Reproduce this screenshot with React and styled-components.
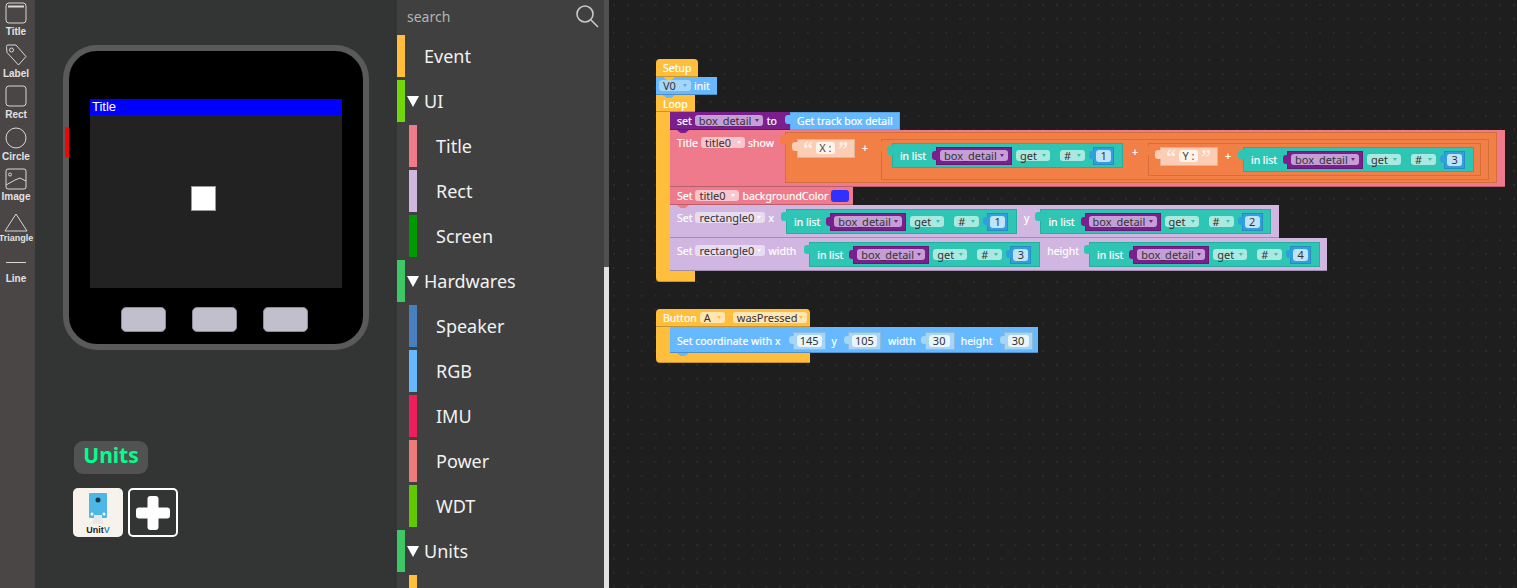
import React from 'react';
import styled, { createGlobalStyle } from 'styled-components';

const YELLOW = '#ffbf3c';
const SKY = '#66b8ff';
const PINK = '#ee7a8b';
const LILAC = '#d0b6e0';
const ORANGE = '#f27f45';
const TEAL = '#2fc5b4';
const PURPLE = '#7b1e8e';

const GlobalStyle = createGlobalStyle`
  html, body {
    margin: 0;
    height: 100%;
    overflow: hidden;
    background: #1e1e1e;
  }
`;

const Page = styled.div`
  display: flex;
  width: 1517px;
  height: 588px;
  overflow: hidden;
`;

/* left tool rail */
const Rail = styled.div`
  width: 35px;
  flex: none;
  padding: 2px 3px 0 0;
  box-sizing: border-box;
  background: #4a4645;
  display: flex;
  flex-direction: column;
`;

const Tool = styled.div`
  height: ${props => props.$h || 41.5}px;
  padding-top: ${props => props.$pt || 0}px;
  box-sizing: border-box;
  display: flex;
  flex-direction: column;
  align-items: center;
  svg { display: block; flex: none; }
`;

const ToolName = styled.span`
  font: bold ${props => props.$small ? 9 : 10}px/12px "Liberation Sans", sans-serif;
  color: #e2e2e2;
  margin-top: ${props => props.$top ?? 2}px;
`;

/* device preview panel */
const Stage = styled.div`
  width: 362px;
  flex: none;
  box-sizing: border-box;
  background: #333534;
  padding: 45px 0 0 28px;
`;

const Device = styled.div`
  position: relative;
  width: 306px;
  height: 305px;
  box-sizing: border-box;
  border: 6px solid #5a5a5a;
  border-radius: 34px;
  background: #000;
  padding: 48px 0 0 21px;
`;

const SideLed = styled.div`
  position: absolute;
  left: -4px;
  top: 76px;
  width: 4px;
  height: 31px;
  border-radius: 2px;
  background: #ff0000;
`;

const Screen = styled.div`
  position: relative;
  width: 252px;
  height: 189px;
  background: #222;
`;

const TitleBar = styled.div`
  height: 16px;
  background: #0000ff;
  color: #fff;
  font: 13px/16px "Liberation Sans", sans-serif;
  padding-left: 2px;
`;

const Square = styled.div`
  position: absolute;
  left: 101px;
  top: 87px;
  width: 25px;
  height: 25px;
  box-sizing: border-box;
  background: #fff;
  border: 1px solid #999;
`;

const Keys = styled.div`
  display: flex;
  gap: 26px;
  margin: 19px 0 0 31px;
`;

const Key = styled.div`
  width: 45px;
  height: 25px;
  box-sizing: border-box;
  border-radius: 5px;
  background: #c1bfcb;
  border: 1px solid #8d8b98;
`;

const UnitsBadge = styled.div`
  width: 74px;
  height: 33px;
  margin: 91px 0 0 11px;
  border-radius: 9px;
  background: #525252;
  color: #00ff8c;
  font: bold 21px/28px "Noto Sans", sans-serif;
  text-align: center;
`;

const Thumbs = styled.div`
  display: flex;
  gap: 5px;
  margin: 14px 0 0 10px;
`;

const UnitCard = styled.div`
  width: 50px;
  height: 49px;
  border-radius: 5px;
  background: #f7f3ec;
  display: flex;
  flex-direction: column;
  align-items: center;
  padding-top: 5px;
  box-sizing: border-box;
`;

const UnitName = styled.span`
  font: bold 9px/9px "Liberation Sans", sans-serif;
  color: #222;
  margin-top: 1px;
  b { color: #2f8fd0; }
`;

const AddCard = styled.div`
  width: 50px;
  height: 49px;
  box-sizing: border-box;
  border: 2px solid #fff;
  border-radius: 5px;
  display: flex;
  align-items: center;
  justify-content: center;
  svg { filter: blur(0.6px); }
`;

/* block palette */
const Palette = styled.div`
  width: 207px;
  flex: none;
  background: #404040;
  overflow: hidden;
`;

const SearchRow = styled.div`
  height: 35px;
  display: flex;
  align-items: center;
  justify-content: space-between;
  padding: 0 5px 3px 10px;
  box-sizing: border-box;
  color: #b4b4b4;
  font: 14px "Noto Sans", sans-serif;
`;

const Category = styled.div`
  height: 42px;
  margin-bottom: 3px;
  display: flex;
  align-items: center;
  padding-left: ${props => props.$child ? 12 : 0}px;
  color: #f2f2f2;
  font: 18px/42px "Noto Sans", sans-serif;
`;

const Swatch = styled.div`
  width: 8px;
  height: 42px;
  flex: none;
  background: ${props => props.$color};
`;

const Caret = styled.span`
  width: 0;
  height: 0;
  margin: 0 5px 0 2px;
  border-left: 6px solid transparent;
  border-right: 6px solid transparent;
  border-top: 11px solid #fff;
`;

const CategoryName = styled.span`
  margin-left: ${props => props.$gap}px;
`;

const ScrollTrack = styled.div`
  width: 5px;
  flex: none;
  background: #505050;
  padding-top: 267px;
`;

const ScrollThumb = styled.div`
  height: 321px;
  background: #e2e2e2;
`;

/* workspace, stacks sit on a free canvas */
const Workspace = styled.div`
  position: relative;
  flex: 1;
  background-color: #1e1e1e;
  background-image: radial-gradient(circle at 1px 1px, #2b2b2b 1px, transparent 1.4px);
  background-size: 13.85px 13.85px;
  background-position: 4px 4px;
`;

const Stack = styled.div`
  position: absolute;
  left: 47px;
  top: ${props => props.$top}px;
  display: flex;
  flex-direction: column;
  align-items: flex-start;
  font: 11px "Noto Sans", sans-serif;
  color: #fff;
`;

const Block = styled.div`
  position: relative;
  display: flex;
  align-items: flex-start;
  box-sizing: border-box;
  width: ${props => props.$w}px;
  height: ${props => props.$h}px;
  padding: ${props => props.$pad || '0 0 0 7px'};
  background: ${props => props.$bg};
  box-shadow: inset 0 -1px 0 rgba(0, 0, 0, 0.22);
  border-radius: ${props => props.$radius || '0'};
  ${props => props.$notch && `
    &::after {
      content: "";
      position: absolute;
      z-index: 3;
      left: 7px;
      bottom: -3px;
      width: 12px;
      height: 3px;
      background: ${props.$bg};
      clip-path: polygon(0 0, 100% 0, 70% 100%, 30% 100%);
    }
  `}
`;

const Label = styled.span`
  flex: none;
  font-size: 10.5px;
  line-height: 18px;
  white-space: nowrap;
  -webkit-text-stroke: 0.2px #fff;
  margin-left: ${props => props.$ml || 0}px;
  margin-right: ${props => props.$mr || 0}px;
`;

const Pill = styled.span`
  flex: none;
  display: flex;
  align-items: center;
  justify-content: space-between;
  box-sizing: border-box;
  width: ${props => props.$w}px;
  height: 11px;
  margin: ${props => props.$m || '3px 0 0 0'};
  padding: 0 4px;
  border-radius: 3px;
  background: ${props => props.$bg};
  color: ${props => props.$color || '#333'};
  font-size: 11px;
  line-height: 11px;
  &::after {
    content: "";
    flex: none;
    border-left: 2.5px solid transparent;
    border-right: 2.5px solid transparent;
    border-top: 3px solid ${props => props.$arrow || '#fff'};
  }
`;

const ColorChip = styled.span`
  flex: none;
  width: 18px;
  height: 12px;
  margin: 3px 0 0 3px;
  border-radius: 3px;
  background: #3030ff;
`;

const Socket = styled.div`
  position: relative;
  flex: none;
  display: flex;
  align-items: flex-start;
  box-sizing: border-box;
  width: ${props => props.$w}px;
  height: ${props => props.$h}px;
  margin: ${props => props.$m || '0'};
  padding: ${props => props.$pad || '0'};
  background: ${props => props.$bg};
  box-shadow: inset 0 0 0 1px rgba(0, 0, 0, 0.12);
  &::before {
    content: "";
    position: absolute;
    left: -5px;
    top: 3px;
    width: 6px;
    height: 9px;
    border-radius: 3px 0 0 3px;
    background: ${props => props.$bg};
  }
`;

const TextValue = styled.span`
  flex: none;
  width: 19px;
  margin: 3px 0 0 4px;
  height: 12px;
  line-height: 12px;
  text-align: center;
  border-radius: 3px;
  background: #fff3ea;
  color: #444;
  font-size: 11px;
  white-space: nowrap;
`;

const Quote = styled.span`
  flex: none;
  width: 9px;
  margin: 2px 0 0 ${props => props.$ml || 0}px;
  color: #fff;
  opacity: 0.7;
  font: bold 20px/16px "Liberation Serif", serif;
`;

const NumSlot = styled.div`
  position: relative;
  flex: none;
  box-sizing: border-box;
  width: ${props => props.$w}px;
  height: 18px;
  margin: ${props => props.$m || '0'};
  padding: ${props => props.$pad || '3px 3px 0'};
  background: ${props => props.$bg};
  box-shadow: inset 0 0 0 1px rgba(0, 0, 0, 0.12);
  &::before {
    content: "";
    position: absolute;
    left: -4px;
    top: 4px;
    width: 5px;
    height: 8px;
    border-radius: 3px 0 0 3px;
    background: ${props => props.$bg};
  }
`;

const NumValue = styled.div`
  height: 12px;
  border-radius: 3px;
  background: ${props => props.$bg};
  color: #333;
  font-size: 11px;
  line-height: 12px;
  text-align: center;
`;

const VarChip = styled.div`
  position: relative;
  flex: none;
  box-sizing: border-box;
  width: 76px;
  height: 18px;
  margin-left: 10px;
  padding-left: 4px;
  background: ${PURPLE};
  box-shadow: inset 0 0 0 1px rgba(0, 0, 0, 0.15);
  &::before {
    content: "";
    position: absolute;
    left: -4px;
    top: 4px;
    width: 5px;
    height: 9px;
    border-radius: 3px 0 0 3px;
    background: ${PURPLE};
  }
`;

const BlockRow = styled.div`
  position: relative;
  z-index: 2;
  display: flex;
  align-items: flex-start;
`;

const LoopWrap = styled.div`
  display: flex;
  align-items: flex-start;
`;

const Spine = styled.div`
  width: 14px;
  height: ${props => props.$h}px;
  flex: none;
  background: ${YELLOW};
`;

const LoopBody = styled.div`
  display: flex;
  flex-direction: column;
  align-items: flex-start;
`;

function InList({ n, m = '0' }) {
  return (
    <Socket $bg={TEAL} $w={231} $h={25} $m={m} $pad="4px 0 0 8px">
      <Label>in list</Label>
      <VarChip>
        <Pill $w={68} $bg="#c49fd6" $m="3px 0 0 0" $arrow="#7b1e8e">box_detail</Pill>
      </VarChip>
      <Pill $w={34} $bg="#abe8df" $m="3px 0 0 4px" $arrow="#2fc5b4">get</Pill>
      <Pill $w={25} $bg="#abe8df" $m="3px 0 0 10px" $arrow="#2fc5b4">#</Pill>
      <NumSlot $w={21} $bg="#2f9fdd" $m="0 0 0 8px">
        <NumValue $bg="#bfe3f7">{n}</NumValue>
      </NumSlot>
    </Socket>
  );
}

function TextBlock({ value }) {
  return (
    <Socket $bg="#fbcdb4" $w={58} $h={19} $pad="0 0 0 6px">
      <Quote>“</Quote>
      <TextValue>{value}</TextValue>
      <Quote $ml={3}>”</Quote>
    </Socket>
  );
}

function Coord({ w, value, right }) {
  return (
    <NumSlot $w={w} $bg="#a6d6f7" $pad={`3px ${right}px 0 4px`}>
      <NumValue $bg="#e8f5fd">{value}</NumValue>
    </NumSlot>
  );
}

const tools = [
  {
    name: 'Title',
    icon: <><rect x="1" y="1" width="20" height="20" rx="3" /><path d="M3 4.5h16" strokeWidth="2" /></>,
  },
  {
    name: 'Label',
    icon: <><path d="M1.5 2.5Q1.5 1 3 1H11L21 12.5 13.5 21 2 8.5z" /><circle cx="6.5" cy="6" r="2" /></>,
  },
  { name: 'Rect', icon: <rect x="1" y="1" width="20" height="20" rx="3" /> },
  { name: 'Circle', icon: <circle cx="11" cy="11" r="10" /> },
  {
    name: 'Image',
    icon: <><rect x="1" y="1" width="20" height="20" rx="2" /><circle cx="5" cy="6.5" r="1.5" /><path d="M1 17 10 12l5-2 6 3" /></>,
  },
];

const categories = [
  { name: 'Event', color: YELLOW },
  { name: 'UI', color: '#72d70a', open: true },
  { name: 'Title', color: PINK, child: true },
  { name: 'Rect', color: LILAC, child: true },
  { name: 'Screen', color: '#009a00', child: true },
  { name: 'Hardwares', color: '#3cc864', open: true },
  { name: 'Speaker', color: '#4a7fbf', child: true },
  { name: 'RGB', color: SKY, child: true },
  { name: 'IMU', color: '#ee1e5a', child: true },
  { name: 'Power', color: '#ee7a7a', child: true },
  { name: 'WDT', color: '#5fc800', child: true },
  { name: 'Units', color: '#3cc864', open: true },
  { name: '', color: YELLOW, child: true },
];

export default function App() {
  return (
    <Page>
      <GlobalStyle />
      <Rail>
        {tools.map(t => (
          <Tool key={t.name}>
            <svg width="22" height="22" viewBox="0 0 22 22" fill="none" stroke="#d8d8d8" strokeWidth="1">{t.icon}</svg>
            <ToolName $top={t.name === 'Image' ? 1 : 2}>{t.name}</ToolName>
          </Tool>
        ))}
        <Tool $h={49.5} $pt={3}>
          <svg width="24" height="19" viewBox="0 0 24 19" fill="none" stroke="#d8d8d8" strokeWidth="1">
            <path d="M1 18 12 1l11 17z" />
          </svg>
          <ToolName $small $top={0}>Triangle</ToolName>
        </Tool>
        <Tool>
          <svg width="22" height="10" viewBox="0 0 22 10" stroke="#d8d8d8" strokeWidth="1">
            <path d="M1 3.5h20" />
          </svg>
          <ToolName $top={4}>Line</ToolName>
        </Tool>
      </Rail>

      <Stage>
        <Device>
          <SideLed />
          <Screen>
            <TitleBar>Title</TitleBar>
            <Square />
          </Screen>
          <Keys>
            <Key /><Key /><Key />
          </Keys>
        </Device>
        <UnitsBadge>Units</UnitsBadge>
        <Thumbs>
          <UnitCard>
            <svg width="18" height="32" viewBox="0 0 18 32">
              <rect x="0" y="0" width="18" height="25" rx="1" fill="#4db8e8" />
              <circle cx="9" cy="7" r="2.5" fill="#1d3a4a" />
              <circle cx="3" cy="21" r="1.5" fill="#fff" />
              <circle cx="15" cy="21" r="1.5" fill="#fff" />
              <path d="M5 22h8v4l2 5H3l2-5z" fill="#e8e8e8" />
            </svg>
            <UnitName>Unit<b>V</b></UnitName>
          </UnitCard>
          <AddCard>
            <svg width="36" height="36" viewBox="0 0 36 36" fill="#fff">
              <rect x="12.5" y="1" width="11" height="34" rx="3" />
              <rect x="1" y="12.5" width="34" height="11" rx="3" />
            </svg>
          </AddCard>
        </Thumbs>
      </Stage>

      <Palette>
        <SearchRow>
          search
          <svg width="24" height="24" viewBox="0 0 24 24" fill="none" stroke="#c8c8c8" strokeWidth="1.6">
            <circle cx="10" cy="10" r="8" />
            <path d="m16 16 7 7" />
          </svg>
        </SearchRow>
        {categories.map((c, i) => (
          <Category key={i} $child={c.child}>
            <Swatch $color={c.color} />
            {c.open && <Caret />}
            <CategoryName $gap={c.open ? 0 : 19}>{c.name}</CategoryName>
          </Category>
        ))}
      </Palette>
      <ScrollTrack>
        <ScrollThumb />
      </ScrollTrack>

      <Workspace>
        <Stack $top={59}>
          <Block $bg={YELLOW} $w={42} $h={18} $radius="4px 4px 0 0" $notch>
            <Label>Setup</Label>
          </Block>
          <Block $bg={SKY} $w={61} $h={18} $pad="0 0 0 3px" $notch>
            <Pill $w={32} $bg="#a6d6f7" $arrow="#5aa8e8">V0</Pill>
            <Label $ml={3}>init</Label>
          </Block>
          <Block $bg={YELLOW} $w={39} $h={17}>
            <Label>Loop</Label>
          </Block>
          <LoopWrap>
            <Spine $h={159} />
            <LoopBody>
              <BlockRow>
                <Block $bg={PURPLE} $h={18} $w={120} $notch>
                  <Label>set</Label>
                  <Pill $w={68} $bg="#c49fd6" $m="3px 0 0 3px" $arrow="#7b1e8e">box_detail</Pill>
                  <Label $ml={4}>to</Label>
                </Block>
                <Socket $bg={SKY} $w={110} $h={18} $pad="0 0 0 7px">
                  <Label>Get track box detail</Label>
                </Socket>
              </BlockRow>
              <Block $bg={PINK} $h={57} $w={835} $pad="4px 0 0 7px" $notch>
                <Label>Title</Label>
                <Pill $w={44} $bg="#f9c6ce" $m="3px 0 0 3px">title0</Pill>
                <Label $ml={3}>show</Label>
                <Socket $bg={ORANGE} $w={712} $h={51} $m="-2px 0 0 11px" $pad="7px 0 0 12px">
                  <TextBlock value="X :" />
                  <Label $ml={7}>+</Label>
                  <Socket $bg={ORANGE} $w={608} $h={41} $m="0 0 0 13px" $pad="4px 0 0 11px">
                    <InList n="1" />
                    <Label $ml={9}>+</Label>
                    <Socket $bg={ORANGE} $w={333} $h={33} $m="0 0 0 10px" $pad="4px 0 0 12px">
                      <TextBlock value="Y :" />
                      <Label $ml={7}>+</Label>
                      <InList n="3" m="0 0 0 12px" />
                    </Socket>
                  </Socket>
                </Socket>
              </Block>
              <Block $bg={PINK} $h={18} $w={183} $notch>
                <Label>Set</Label>
                <Pill $w={44} $bg="#f9c6ce" $m="3px 0 0 3px">title0</Pill>
                <Label $ml={3}>backgroundColor</Label>
                <ColorChip />
              </Block>
              <Block $bg={LILAC} $h={33} $w={609} $pad="4px 0 0 7px" $notch>
                <Label>Set</Label>
                <Pill $w={70} $bg="#e8dcf0" $m="3px 0 0 3px">rectangle0</Pill>
                <Label $ml={3} $mr={12}>x</Label>
                <InList n="1" />
                <Label $ml={7}>y</Label>
                <InList n="2" m="0 0 0 11px" />
              </Block>
              <Block $bg={LILAC} $h={33} $w={657} $pad="4px 0 0 7px">
                <Label>Set</Label>
                <Pill $w={70} $bg="#e8dcf0" $m="3px 0 0 3px">rectangle0</Pill>
                <Label $ml={3} $mr={13}>width</Label>
                <InList n="3" />
                <Label $ml={7}>height</Label>
                <InList n="4" m="0 0 0 10px" />
              </Block>
            </LoopBody>
          </LoopWrap>
          <Block $bg={YELLOW} $w={39} $h={11} $radius="0 0 0 4px" />
        </Stack>

        <Stack $top={309}>
          <Block $bg={YELLOW} $w={154} $h={18} $radius="4px 4px 0 0">
            <Label>Button</Label>
            <Pill $w={25} $bg="#ffe6b3" $m="3px 0 0 3px" $arrow="#ffbf3c">A</Pill>
            <Pill $w={74} $bg="#ffe6b3" $m="3px 0 0 8px" $arrow="#ffbf3c">wasPressed</Pill>
          </Block>
          <LoopWrap>
            <Spine $h={26} />
            <Block $bg={SKY} $h={26} $w={368} $pad="5px 0 0 7px" $notch>
              <Label $mr={12}>Set coordinate with x</Label>
              <Coord w={33} value="145" right={4} />
              <Label $ml={6} $mr={11}>y</Label>
              <Coord w={33} value="105" right={4} />
              <Label $ml={7} $mr={9}>width</Label>
              <Coord w={30} value="30" right={5} />
              <Label $ml={6} $mr={11}>height</Label>
              <Coord w={29} value="30" right={4} />
            </Block>
          </LoopWrap>
          <Block $bg={YELLOW} $w={154} $h={10} $radius="0 0 0 4px" />
        </Stack>
      </Workspace>
    </Page>
  );
}
